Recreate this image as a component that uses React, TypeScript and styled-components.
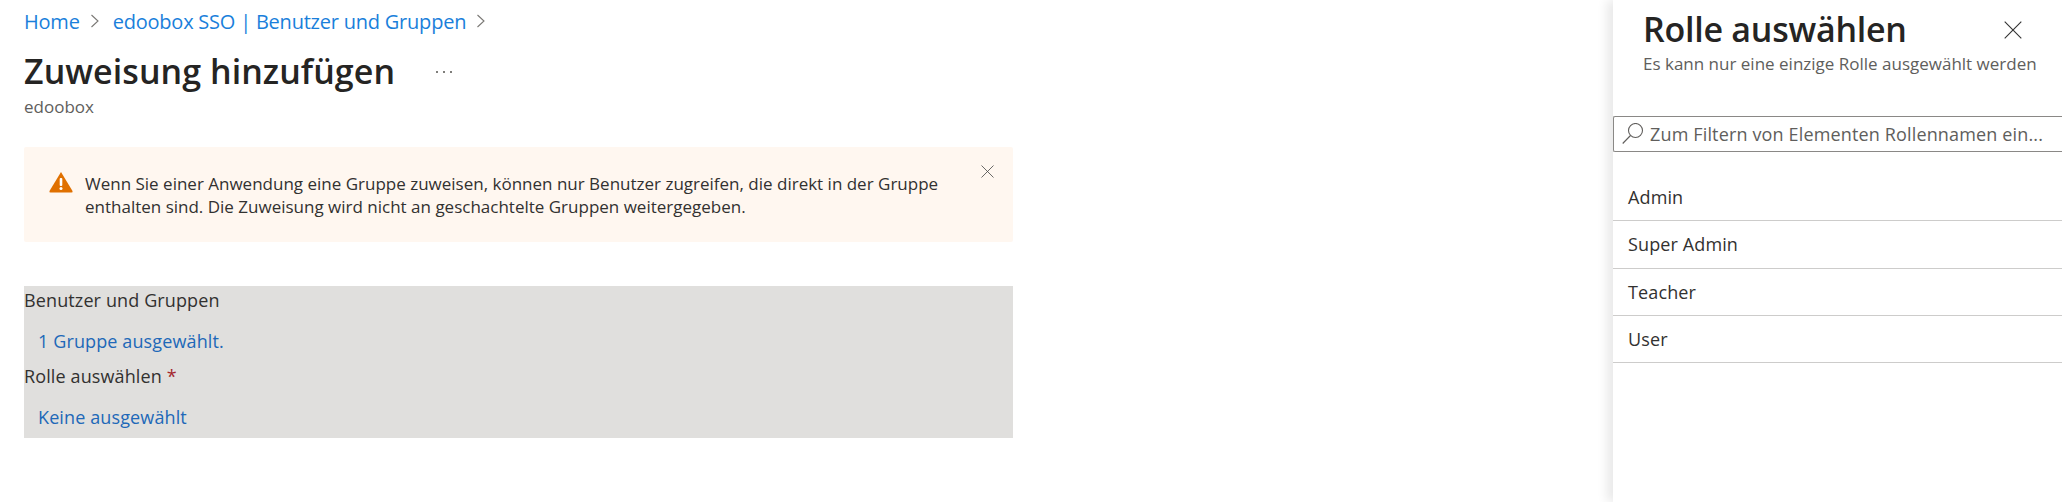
import React from "react";
import styled, { createGlobalStyle } from "styled-components";

const Global = createGlobalStyle`
  html, body { margin: 0; padding: 0; background: #fff; height: 100%; overflow: hidden; }
  body { font-family: "Open Sans", "Noto Sans", "Liberation Sans", sans-serif; }
`;

const Page = styled.div`
  display: flex;
  width: 2062px;
  height: 502px;
  overflow: hidden;
`;

const Main = styled.main`
  flex: 1;
  min-width: 0;
  padding: 8px 0 0 24px;
`;

const Breadcrumb = styled.nav`
  display: flex;
  align-items: center;
  height: 26px;
  font-size: 20px;
  color: #1a7fdb;
`;

const Crumb = styled.a`
  letter-spacing: -0.22px;
`;

const Chevron = styled.svg`
  width: 12px;
  height: 16px;
  margin: 0 12px 0 9px;
  flex: none;
`;

const TitleRow = styled.div`
  display: flex;
  align-items: center;
  margin-top: 12px;
  height: 50px;
`;

const Title = styled.h1`
  margin: 0;
  font-size: 34px;
  line-height: 46px;
  font-weight: 600;
  color: #252423;
  letter-spacing: 0.06px;
  white-space: nowrap;
`;

const More = styled.span`
  margin-left: 41px;
  padding-top: 2px;
  display: flex;
  gap: 5px;
`;

const Dot = styled.i`
  width: 2px;
  height: 2px;
  background: #55534f;
  border-radius: 50%;
`;

const Subtitle = styled.div`
  margin-top: 1px;
  font-size: 17px;
  line-height: 20px;
  color: #605e5c;
`;

const Alert = styled.div`
  position: relative;
  display: flex;
  width: 989px;
  height: 95px;
  box-sizing: border-box;
  margin-top: 30px;
  padding: 25px 0 0 25px;
  background: #fff7f0;
  border-radius: 2px;
`;

const AlertIcon = styled.svg`
  flex: none;
  width: 24px;
  height: 22px;
  margin-top: -1px;
`;

const AlertText = styled.p`
  margin: 0 0 0 12px;
  width: 880px;
  font-size: 17px;
  line-height: 23px;
  color: #323130;
`;

const AlertClose = styled.svg`
  position: absolute;
  top: 18px;
  right: 19px;
  width: 13px;
  height: 13px;
`;

const Form = styled.section`
  width: 989px;
  height: 152px;
  margin-top: 44px;
  background: #e0dfdd;
  display: flex;
  flex-direction: column;
`;

const FieldLabel = styled.div`
  height: 28px;
  padding-top: 1px;
  font-size: 18px;
  line-height: 26px;
  color: #323130;
  letter-spacing: 0.12px;
`;

const FieldValue = styled.a`
  display: block;
  height: 48px;
  padding: 14px 0 0 14px;
  box-sizing: border-box;
  font-size: 18px;
  line-height: 24px;
  color: #2068b8;
  letter-spacing: 0.12px;
`;

const Required = styled.span`
  color: #a4262c;
`;

const Panel = styled.aside`
  width: 449px;
  flex: none;
  height: 502px;
  background: #fff;
  box-shadow: -6px 0 10px rgba(0, 0, 0, 0.09);
  position: relative;
`;

const PanelHeader = styled.header`
  position: relative;
  padding: 6px 0 0 30px;
  height: 107px;
  box-sizing: border-box;
`;

const PanelTitle = styled.h2`
  margin: 0;
  font-size: 34px;
  line-height: 46px;
  font-weight: 600;
  color: #252423;
  letter-spacing: -0.25px;
`;

const PanelSub = styled.div`
  margin-top: 2px;
  font-size: 17px;
  line-height: 20px;
  color: #605e5c;
`;

const PanelClose = styled.svg`
  position: absolute;
  top: 21px;
  right: 40px;
  width: 18px;
  height: 18px;
`;

const Search = styled.div`
  display: flex;
  align-items: center;
  box-sizing: border-box;
  height: 36px;
  margin-top: 9px;
  padding-left: 8px;
  border: 1px solid #8a8886;
  border-right: none;
  border-radius: 2px 0 0 2px;
`;

const SearchIcon = styled.svg`
  width: 22px;
  height: 22px;
  flex: none;
`;

const SearchText = styled.span`
  margin-left: 6px;
  font-size: 18px;
  color: #605e5c;
  white-space: nowrap;
  letter-spacing: 0.15px;
`;

const RoleList = styled.ul`
  list-style: none;
  margin: 22px 0 0;
  padding: 0;
`;

const Role = styled.li`
  height: 47.33px;
  box-sizing: border-box;
  border-bottom: 1px solid #cdcccb;
  padding: 0 0 0 15px;
  display: flex;
  align-items: center;
  font-size: 18px;
  color: #323130;
  letter-spacing: 0.12px;
`;

const ChevronIcon = () => (
  <Chevron viewBox="0 0 12 16" fill="none" stroke="#7a7875" strokeWidth="1.1">
    <path d="M2.5 2 L9 8 L2.5 14" />
  </Chevron>
);

const Cross = ({ color }: { color: string }) => (
  <path d="M0.5 0.5 L12.5 12.5 M12.5 0.5 L0.5 12.5" stroke={color} strokeWidth="0.8" fill="none" />
);

export default function App() {
  return (
    <Page>
      <Global />
      <Main>
        <Breadcrumb>
          <Crumb>Home</Crumb>
          <ChevronIcon />
          <Crumb>edoobox SSO | Benutzer und Gruppen</Crumb>
          <ChevronIcon />
        </Breadcrumb>
        <TitleRow>
          <Title>Zuweisung hinzufügen</Title>
          <More><Dot /><Dot /><Dot /></More>
        </TitleRow>
        <Subtitle>edoobox</Subtitle>
        <Alert>
          <AlertIcon viewBox="0 0 24 22">
            <path d="M12 1 L23.5 20 Q24 21.5 22.5 21.5 L1.5 21.5 Q0 21.5 0.5 20 Z" fill="#e07000" />
            <rect x="10.7" y="7" width="2.6" height="8" rx="1" fill="#fff" />
            <circle cx="12" cy="17.6" r="1.5" fill="#fff" />
          </AlertIcon>
          <AlertText>
            Wenn Sie einer Anwendung eine Gruppe zuweisen, können nur Benutzer zugreifen, die direkt in der Gruppe enthalten sind. Die Zuweisung wird nicht an geschachtelte Gruppen weitergegeben.
          </AlertText>
          <AlertClose viewBox="0 0 13 13"><Cross color="#444" /></AlertClose>
        </Alert>
        <Form>
          <FieldLabel>Benutzer und Gruppen</FieldLabel>
          <FieldValue>1 Gruppe ausgewählt.</FieldValue>
          <FieldLabel>Rolle auswählen <Required>*</Required></FieldLabel>
          <FieldValue>Keine ausgewählt</FieldValue>
        </Form>
      </Main>
      <Panel>
        <PanelHeader>
          <PanelTitle>Rolle auswählen</PanelTitle>
          <PanelSub>Es kann nur eine einzige Rolle ausgewählt werden</PanelSub>
          <PanelClose viewBox="0 0 13 13"><Cross color="#333" /></PanelClose>
        </PanelHeader>
        <Search>
          <SearchIcon viewBox="0 0 22 22" fill="none" stroke="#605e5c" strokeWidth="1.1">
            <circle cx="13.5" cy="7.5" r="7" />
            <path d="M8.5 12.5 L0.7 20.5" />
          </SearchIcon>
          <SearchText>Zum Filtern von Elementen Rollennamen ein...</SearchText>
        </Search>
        <RoleList>
          <Role>Admin</Role>
          <Role>Super Admin</Role>
          <Role>Teacher</Role>
          <Role>User</Role>
        </RoleList>
      </Panel>
    </Page>
  );
}
